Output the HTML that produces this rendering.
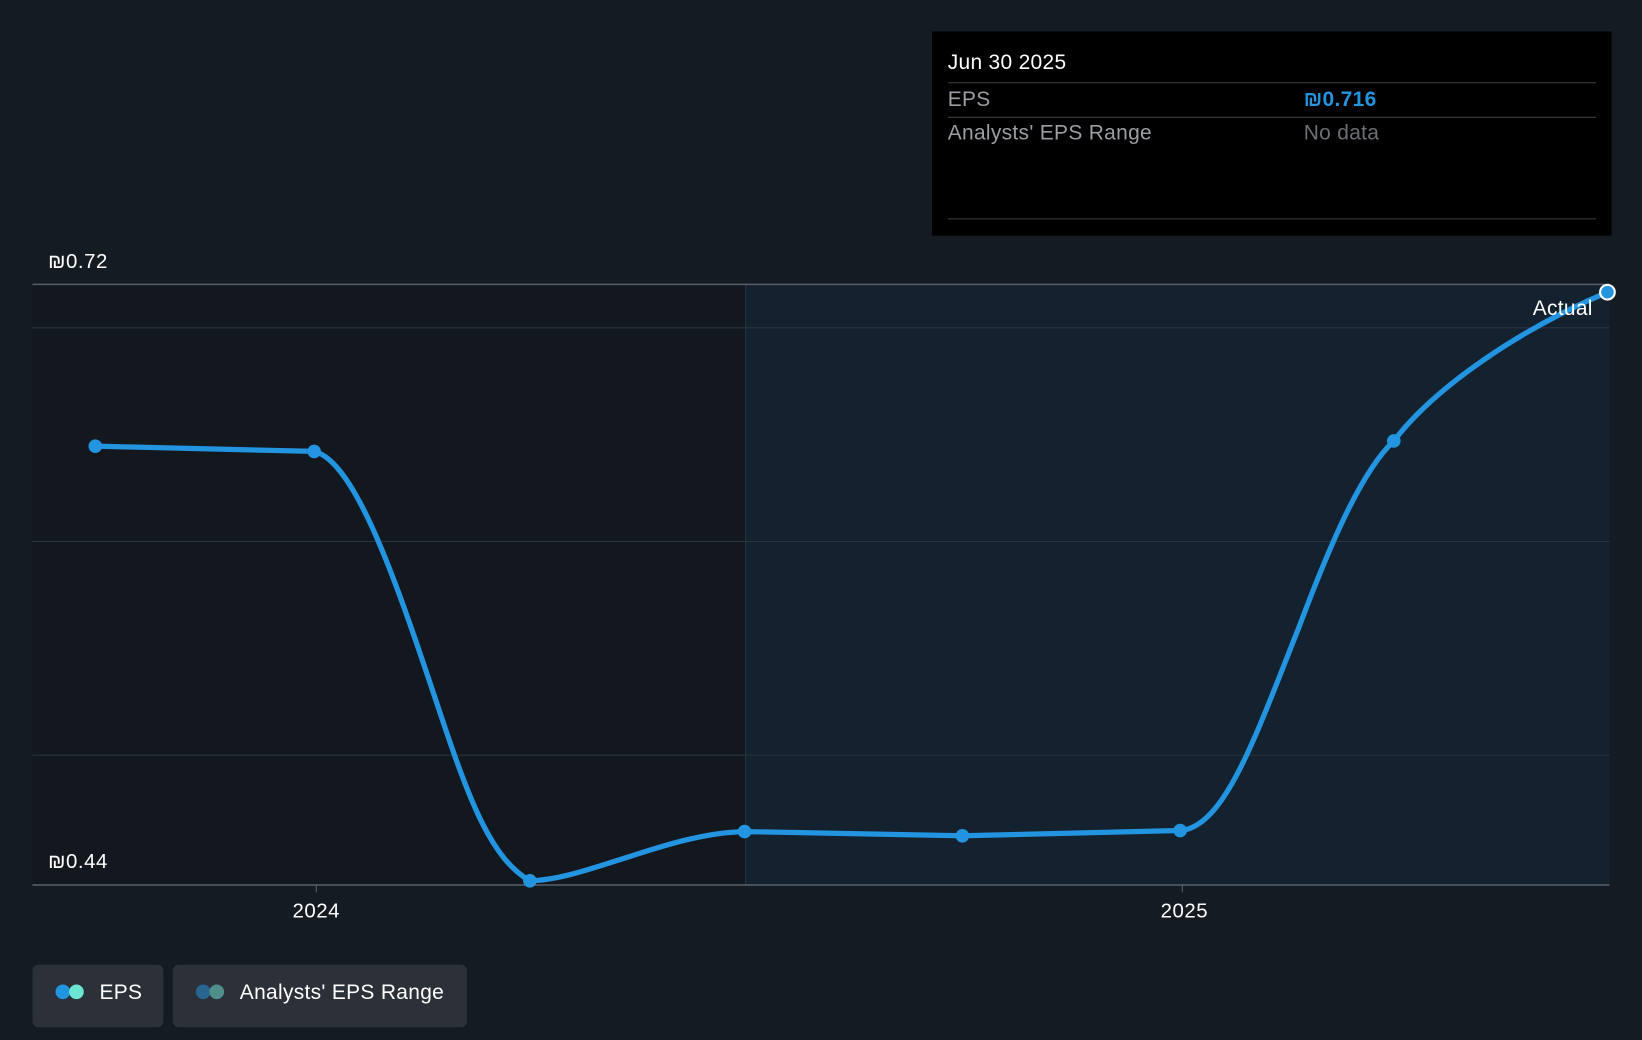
<!DOCTYPE html>
<html><head><meta charset="utf-8"><style>
html,body{margin:0;padding:0;background:#151b23;}
svg{display:block;font-family:"Liberation Sans",sans-serif;}
</style></head><body>
<svg width="1642" height="1040" viewBox="0 0 1568 993" preserveAspectRatio="none">
<rect width="1568" height="993" fill="#151b23"/>
<rect x="31" y="272" width="681" height="573" fill="#13171e"/>
<rect x="712" y="272" width="825" height="573" fill="#14212f"/>
<line x1="712" y1="272" x2="712" y2="845" stroke="#26343f" stroke-width="1"/>
<g stroke="#2c353f" stroke-width="1">
<line x1="31" y1="313" x2="1537" y2="313"/>
<line x1="31" y1="517" x2="1537" y2="517"/>
<line x1="31" y1="721" x2="1537" y2="721"/>
</g>
<line x1="31" y1="271.5" x2="1537" y2="271.5" stroke="#5a6068" stroke-width="1.5"/>
<line x1="31" y1="845" x2="1537" y2="845" stroke="#5a6068" stroke-width="1.5"/>
<line x1="302" y1="845" x2="302" y2="852" stroke="#5a6068"/>
<line x1="1129" y1="845" x2="1129" y2="852" stroke="#5a6068"/>
<g letter-spacing="0.5">
<text x="46" y="256" fill="#fff" font-size="19.5">₪0.72</text>
<text x="46" y="829" fill="#fff" font-size="19.5">₪0.44</text>
<text x="302" y="876" fill="#fff" font-size="19.5" text-anchor="middle">2024</text>
<text x="1131" y="876" fill="#fff" font-size="19.5" text-anchor="middle">2025</text>
</g>
<path d="M91,426 L300,431 C340,440 380,560 420,680 C450,770 470,820 506,841 C560,840 640,795 711,794 L919,798 L1127,793 C1170,790 1200,700 1240,600 C1270,520 1300,450 1331,421 C1370,370 1450,315 1535,279" fill="none" stroke="#2394e0" stroke-width="5"/>
<g fill="#2394e0">
<circle cx="91" cy="426" r="6.5"/><circle cx="300" cy="431" r="6.5"/><circle cx="506" cy="841" r="6.5"/>
<circle cx="711" cy="794" r="6.5"/><circle cx="919" cy="798" r="6.5"/><circle cx="1127" cy="793" r="6.5"/>
<circle cx="1331" cy="421" r="6.5"/>
</g>
<circle cx="1535" cy="279" r="7" fill="#2394e0" stroke="#fff" stroke-width="2"/>
<text x="1521" y="301" fill="#fff" font-size="20" text-anchor="end" letter-spacing="0.3">Actual</text>
<rect x="890" y="30" width="649" height="195" fill="#000"/>
<g font-size="20" letter-spacing="0.3">
<text x="905" y="66" fill="#fff">Jun 30 2025</text>
<text x="905" y="101" fill="#9a9ea3">EPS</text>
<text x="1245" y="101" fill="#2394e0" font-weight="bold">₪0.716</text>
<text x="905" y="133" fill="#9a9ea3">Analysts' EPS Range</text>
<text x="1245" y="133" fill="#6b6f74">No data</text>
</g>
<line x1="905" y1="79" x2="1524" y2="79" stroke="#3a3f45"/>
<line x1="905" y1="112" x2="1524" y2="112" stroke="#3a3f45"/>
<line x1="905" y1="209" x2="1524" y2="209" stroke="#3a3f45"/>
<rect x="31" y="921" width="125" height="60" rx="6" fill="#2b3039"/>
<circle cx="60" cy="947" r="7" fill="#2394e0"/><circle cx="73" cy="947" r="7" fill="#6de5d3"/>
<text x="95" y="954" fill="#fff" font-size="20" letter-spacing="0.3">EPS</text>
<rect x="165" y="921" width="281" height="60" rx="6" fill="#2b3039"/>
<circle cx="194" cy="947" r="7" fill="#2a6591"/><circle cx="207" cy="947" r="7" fill="#4f8f89"/>
<text x="229" y="954" fill="#fff" font-size="20" letter-spacing="0.3">Analysts' EPS Range</text>
</svg>
</body></html>
